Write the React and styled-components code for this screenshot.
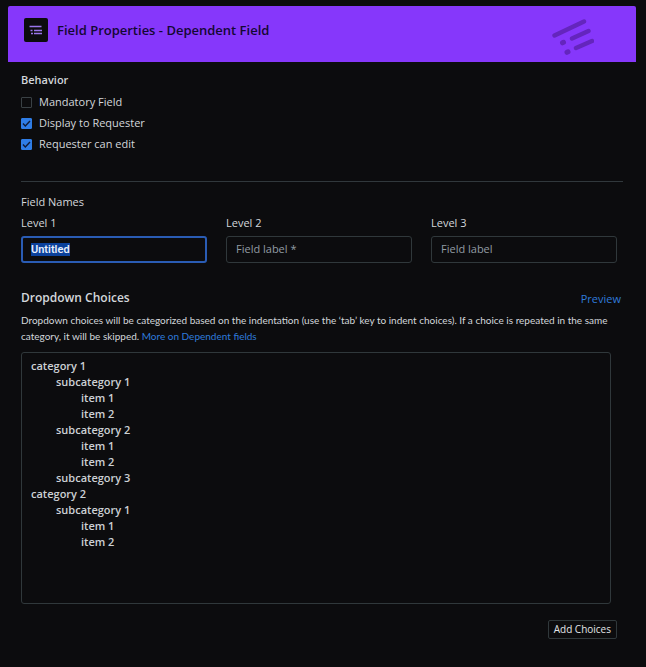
import React, { useEffect, useRef, useState } from 'react';
import styled, { createGlobalStyle } from 'styled-components';

const GlobalStyle = createGlobalStyle`
  * {
    box-sizing: border-box;
  }

  body {
    margin: 0;
    background-color: #0c0c0e;
    color: #d3d7db;
    font-family: 'Open Sans', 'Noto Sans', sans-serif;
    font-size: 11px;
    line-height: 16px;
  }

  input,
  textarea,
  button {
    font-family: inherit;
    font-size: inherit;
    line-height: inherit;
  }
`;

const Panel = styled.main`
  padding: 6px 10px 28px 8px;
`;

const Header = styled.header`
  display: flex;
  align-items: flex-start;
  height: 56px;
  padding: 12px 42px 0 16px;
  background-color: #8637fb;
  border-radius: 2px 2px 0 0;
`;

const IconBox = styled.span`
  display: flex;
  align-items: center;
  justify-content: center;
  width: 24px;
  height: 24px;
  background-color: #0c0c0e;
  border-radius: 2px;
`;

const Title = styled.h1`
  flex: 1;
  margin: 0 0 0 9px;
  color: #140833;
  font-size: 13px;
  font-weight: 600;
  line-height: 24px;
`;

const Body = styled.div`
  padding: 10px 13px 0;
`;

const SectionTitle = styled.h2`
  margin: 0;
  font-size: 11px;
  font-weight: ${props => (props.$strong ? 600 : 400)};
  line-height: 16px;
`;

const CheckList = styled.div`
  display: flex;
  flex-direction: column;
  gap: 5px;
  margin-top: 6px;
`;

const CheckLabel = styled.label`
  display: flex;
  align-items: center;
  gap: 7px;
`;

const CheckMark = styled.span`
  display: grid;
  width: 11px;
  height: 11px;

  > * {
    grid-area: 1 / 1;
  }

  svg {
    pointer-events: none;
  }
`;

const CheckInput = styled.input`
  appearance: none;
  width: 11px;
  height: 11px;
  margin: 0;
  border: 1px solid #3a4145;
  border-radius: 1px;

  &:checked {
    background-color: #2f7de6;
    border-color: #2f7de6;
  }
`;

const Divider = styled.hr`
  height: 1px;
  margin: 29px 0 12px;
  border: none;
  background-color: #31383c;
`;

const FieldGrid = styled.div`
  display: grid;
  grid-template-columns: repeat(3, 1fr);
  gap: 19px;
  margin: 5px 6px 0 0;
`;

const Field = styled.label`
  display: flex;
  flex-direction: column;
  gap: 5px;
`;

const TextInput = styled.input`
  width: 100%;
  height: 27px;
  padding: 0 9px;
  background-color: transparent;
  border: 1px solid #30383b;
  border-radius: 3px;
  color: #e6eaf0;
  font-family: Roboto, 'Open Sans', sans-serif;
  font-weight: 600;

  &::placeholder {
    color: #929ca4;
    font-family: 'Open Sans', 'Noto Sans', sans-serif;
    font-weight: 400;
    opacity: 1;
  }

  &::selection {
    background-color: #0b419b;
    color: #e6eefc;
  }

  &:focus {
    padding: 0 8px;
    border: 2px solid #2a5cb4;
    outline: none;
  }
`;

const ChoicesHeader = styled.div`
  display: flex;
  align-items: flex-end;
  justify-content: space-between;
  margin: 26px 2px 0 0;
`;

const ChoicesTitle = styled.h2`
  margin: 0;
  font-size: 12px;
  font-weight: 600;
  line-height: 18px;
`;

const Link = styled.a`
  color: #2f7bdb;
  text-decoration: none;
`;

const Description = styled.p`
  margin: 5px 0 0;
  font-family: Lato, 'Open Sans', sans-serif;
  font-size: 10px;
`;

const ChoicesInput = styled.textarea`
  display: block;
  width: calc(100% - 12px);
  height: 252px;
  margin-top: 8px;
  padding: 5px 9px;
  background-color: transparent;
  border: 1px solid #30383b;
  border-radius: 3px;
  color: #cdd1d5;
  font-weight: 600;
  tab-size: 25px;
  resize: none;

  &:focus {
    border-color: #2a5cb4;
    outline: none;
  }
`;

const Footer = styled.div`
  display: flex;
  justify-content: flex-end;
  margin: 16px 6px 0 0;
`;

const AddButton = styled.button`
  height: 19px;
  padding: 0 5px;
  background-color: transparent;
  border: 1px solid #30383b;
  border-radius: 2px;
  color: #e2e5e8;
  font-size: 10px;
  line-height: 17px;
  cursor: pointer;
`;

const INITIAL_CHOICES = [
  'category 1',
  '\tsubcategory 1',
  '\t\titem 1',
  '\t\titem 2',
  '\tsubcategory 2',
  '\t\titem 1',
  '\t\titem 2',
  '\tsubcategory 3',
  'category 2',
  '\tsubcategory 1',
  '\t\titem 1',
  '\t\titem 2',
].join('\n');

const DependentIcon = () => (
  <svg width="14" height="10" viewBox="0 0 14 10" fill="none" stroke="#9a76ec" strokeWidth="1.3" aria-hidden="true">
    <path d="M0.5 1.5H12.5M5 5.5H13M5 8.5H13" />
    <path d="M1.5 5.5H3.5M2 8.5H4" />
  </svg>
);

const HeaderArt = () => (
  <svg width="44" height="38" viewBox="0 0 44 38" fill="none" stroke="#6425bd" strokeWidth="4.4" strokeLinecap="round" aria-hidden="true">
    <path d="M4.5 17.5L34 3.5M22 20.5L38.5 13M26 30L42 23" />
    <path d="M12.5 24.8L13.5 24.3M17 34.3L18 33.8" strokeWidth="5" />
  </svg>
);

const Checkbox = ({ label, defaultChecked = false }) => {
  const [checked, setChecked] = useState(defaultChecked);

  return (
    <CheckLabel>
      <CheckMark>
        <CheckInput type="checkbox" checked={checked} onChange={e => setChecked(e.target.checked)} />
        {checked && (
          <svg width="11" height="11" viewBox="0 0 11 11" fill="none" aria-hidden="true">
            <path d="M2 5.6L4.3 7.9L9 3" stroke="#101a35" strokeWidth="1.4" />
          </svg>
        )}
      </CheckMark>
      {label}
    </CheckLabel>
  );
};

const App = () => {
  const firstLevel = useRef(null);
  const [choices, setChoices] = useState(INITIAL_CHOICES);

  useEffect(() => {
    firstLevel.current.focus();
    firstLevel.current.select();
  }, []);

  const handleKeyDown = e => {
    if (e.key !== 'Tab' || e.shiftKey) return;
    e.preventDefault();
    const { selectionStart, selectionEnd } = e.target;
    e.target.setRangeText('\t', selectionStart, selectionEnd, 'end');
    setChoices(e.target.value);
  };

  return (
    <>
      <GlobalStyle />
      <Panel>
        <Header>
          <IconBox>
            <DependentIcon />
          </IconBox>
          <Title>Field Properties - Dependent Field</Title>
          <HeaderArt />
        </Header>

        <Body>
          <SectionTitle $strong>Behavior</SectionTitle>
          <CheckList>
            <Checkbox label="Mandatory Field" />
            <Checkbox label="Display to Requester" defaultChecked />
            <Checkbox label="Requester can edit" defaultChecked />
          </CheckList>

          <Divider />

          <SectionTitle>Field Names</SectionTitle>
          <FieldGrid>
            <Field>
              Level 1
              <TextInput ref={firstLevel} type="text" defaultValue="Untitled" />
            </Field>
            <Field>
              Level 2
              <TextInput type="text" placeholder="Field label *" />
            </Field>
            <Field>
              Level 3
              <TextInput type="text" placeholder="Field label" />
            </Field>
          </FieldGrid>

          <ChoicesHeader>
            <ChoicesTitle id="choices-title">Dropdown Choices</ChoicesTitle>
            <Link href="#preview">Preview</Link>
          </ChoicesHeader>
          <Description>
            Dropdown choices will be categorized based on the indentation (use the ‘tab’ key to indent choices).
            If a choice is repeated in the same category, it will be skipped.{' '}
            <Link href="#dependent-fields">More on Dependent fields</Link>
          </Description>
          <ChoicesInput
            aria-labelledby="choices-title"
            spellCheck={false}
            value={choices}
            onChange={e => setChoices(e.target.value)}
            onKeyDown={handleKeyDown}
          />

          <Footer>
            <AddButton type="button">Add Choices</AddButton>
          </Footer>
        </Body>
      </Panel>
    </>
  );
};

export default App;
